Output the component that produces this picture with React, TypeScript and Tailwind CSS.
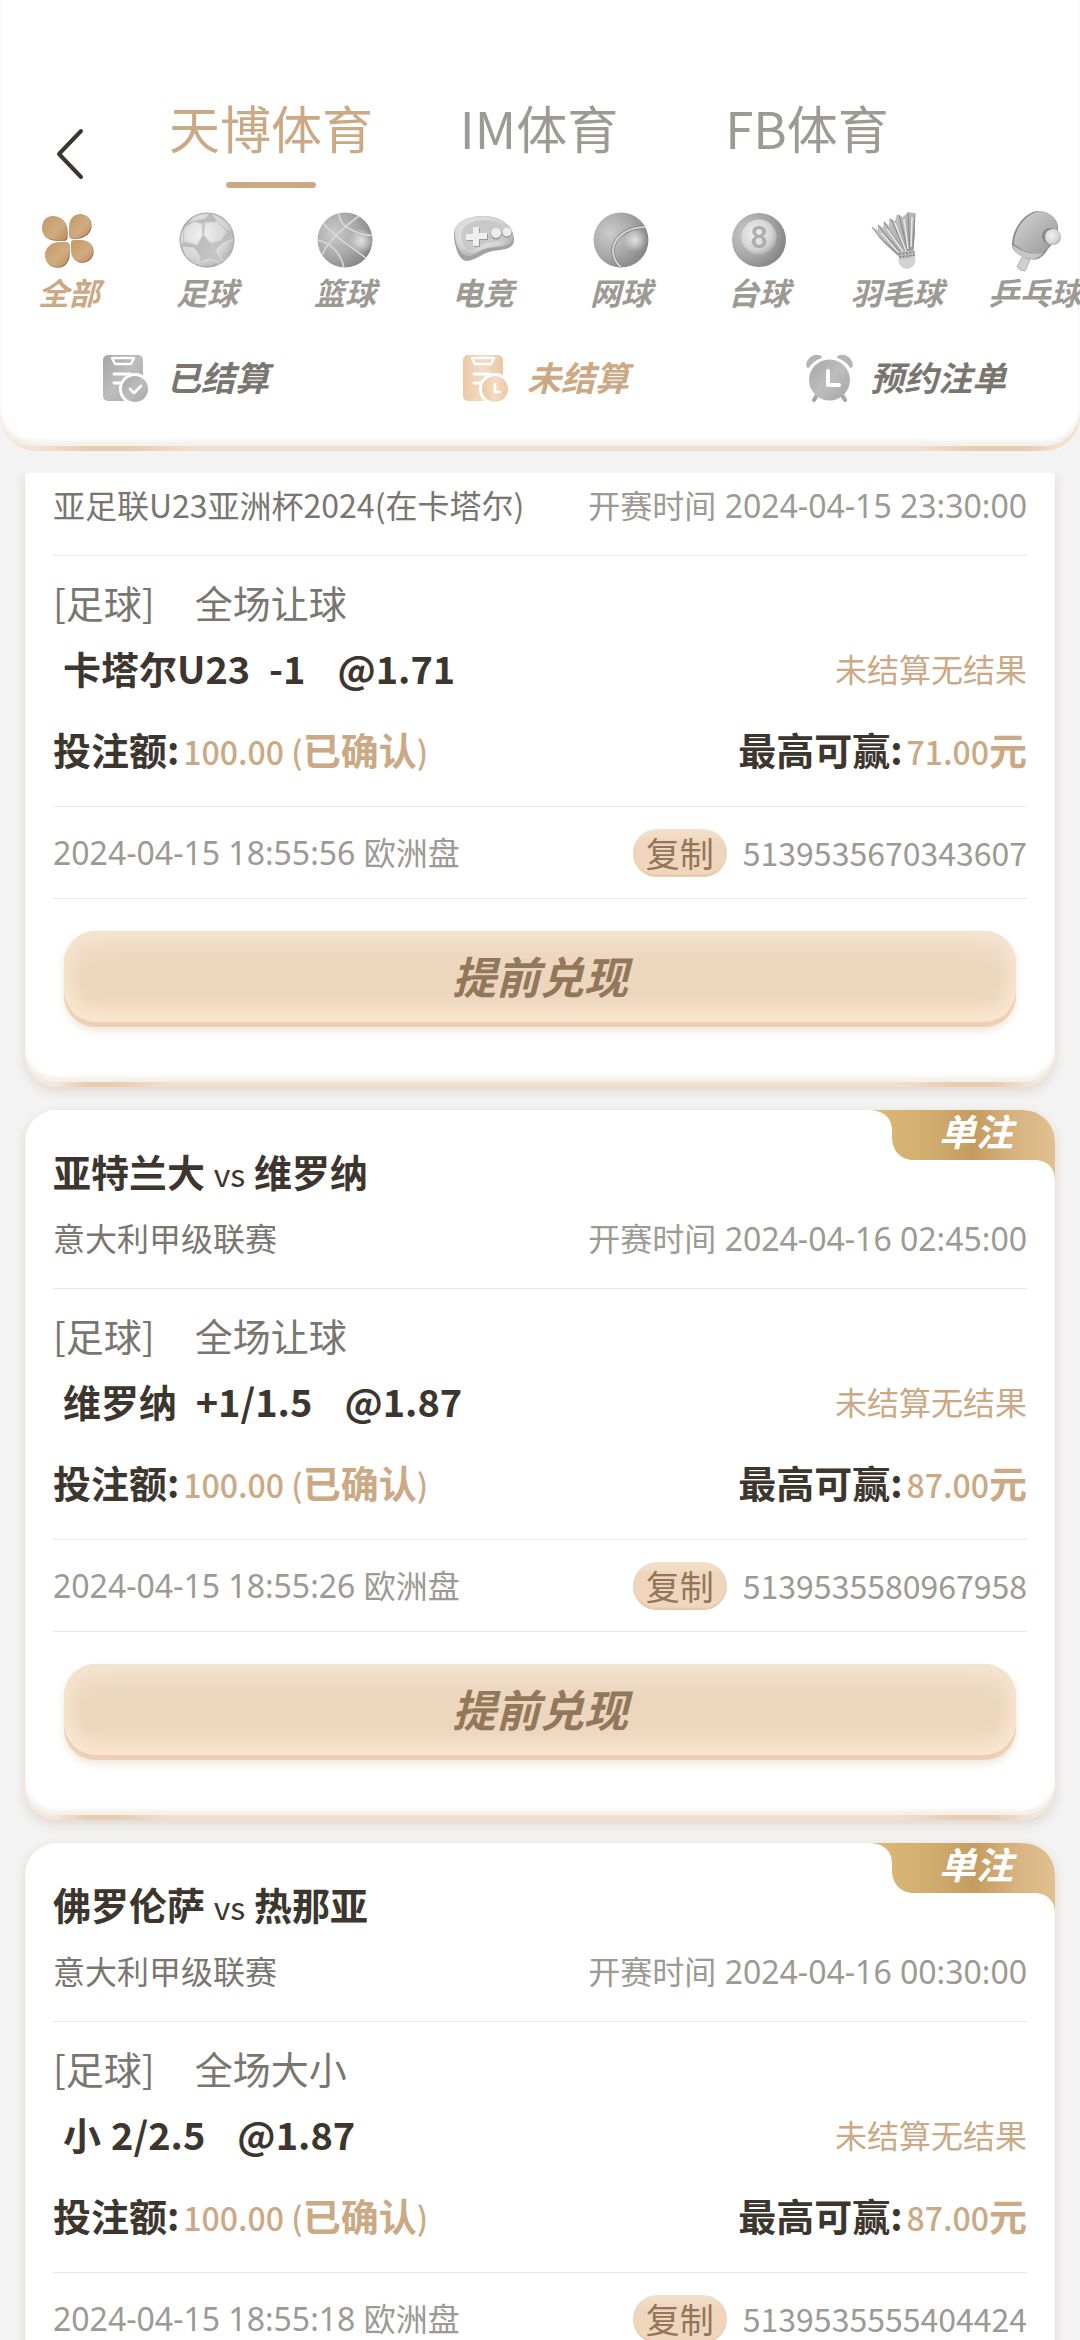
import React, { useState } from 'react';

interface Bet {
  id: string;
  home?: string;
  away?: string;
  league: string;
  kickoff: string;
  market: string;
  pick: string;
  line: string;
  odds: string;
  stake: string;
  win: string;
  placedAt: string;
}

const bets: Bet[] = [
  {
    id: '5139535670343607', league: '亚足联U23亚洲杯2024(在卡塔尔)', kickoff: '2024-04-15 23:30:00',
    market: '全场让球', pick: '卡塔尔U23', line: '\u00a0-1', odds: '1.71', stake: '100.00', win: '71.00', placedAt: '2024-04-15 18:55:56',
  },
  {
    id: '5139535580967958', home: '亚特兰大', away: '维罗纳', league: '意大利甲级联赛', kickoff: '2024-04-16 02:45:00',
    market: '全场让球', pick: '维罗纳', line: '\u00a0+1/1.5', odds: '1.87', stake: '100.00', win: '87.00', placedAt: '2024-04-15 18:55:26',
  },
  {
    id: '5139535555404424', home: '佛罗伦萨', away: '热那亚', league: '意大利甲级联赛', kickoff: '2024-04-16 00:30:00',
    market: '全场大小', pick: '小', line: '2/2.5', odds: '1.87', stake: '100.00', win: '87.00', placedAt: '2024-04-15 18:55:18',
  },
];

// gradients shared by all the sport icons
const IconDefs = () => (
  <svg className="absolute size-0" aria-hidden="true">
    <defs>
      <linearGradient id="gold" x1="0" y1="0" x2="1" y2="1">
        <stop offset="0" stopColor="#c49a68" />
        <stop offset="0.6" stopColor="#d0ab80" />
        <stop offset="1" stopColor="#b68b5b" />
      </linearGradient>
      <radialGradient id="ballLight" cx="0.4" cy="0.4" r="0.65">
        <stop offset="0" stopColor="#f2f2f2" />
        <stop offset="0.7" stopColor="#d4d4d4" />
        <stop offset="1" stopColor="#adadad" />
      </radialGradient>
      <radialGradient id="ballDark" cx="0.3" cy="0.38" r="0.75">
        <stop offset="0" stopColor="#cbcbcb" />
        <stop offset="0.55" stopColor="#a8a8a8" />
        <stop offset="1" stopColor="#828282" />
      </radialGradient>
      <radialGradient id="shine" cx="0.5" cy="0.5" r="0.5">
        <stop offset="0" stopColor="#e2e2e2" />
        <stop offset="1" stopColor="#e2e2e2" stopOpacity="0" />
      </radialGradient>
      <linearGradient id="metal" x1="0" y1="0" x2="1" y2="1">
        <stop offset="0" stopColor="#d4d4d4" />
        <stop offset="1" stopColor="#989898" />
      </linearGradient>
      <linearGradient id="tabGray" x1="0" y1="0" x2="1" y2="1">
        <stop offset="0" stopColor="#a6a6a6" />
        <stop offset="0.5" stopColor="#bdbdbd" />
        <stop offset="1" stopColor="#a6a6a6" />
      </linearGradient>
      <linearGradient id="tabGold" x1="0" y1="0" x2="1" y2="0">
        <stop offset="0" stopColor="#ecc9a5" />
        <stop offset="0.5" stopColor="#f3dcc4" />
        <stop offset="1" stopColor="#ebc8a5" />
      </linearGradient>
      <linearGradient id="badge" x1="0" y1="0" x2="1" y2="0">
        <stop offset="0.05" stopColor="#dcb877" />
        <stop offset="0.35" stopColor="#cfab6d" />
        <stop offset="0.56" stopColor="#c49c60" />
        <stop offset="0.8" stopColor="#d9b583" />
        <stop offset="1" stopColor="#e0c18f" />
      </linearGradient>
      <clipPath id="ballClip"><circle cx="30" cy="30" r="27.5" /></clipPath>
    </defs>
  </svg>
);

const petals = [
  'M14 6C21 6 28 11 28 21V26Q28 30 25 30H17C8 30 3 25 3 18S7 6 14 6Z',
  'M41 4C48 4 52 9 52 15S47 27 38 28H33Q30 28 30 25V17C30 9 35 4 41 4Z',
  'M21 32H27Q30 32 30 35V43C30 52 25 57 18 57S6 52 6 45S12 32 21 32Z',
  'M35 30H42C50 30 54 35 54 41S49 52 43 52S32 48 32 40V33Q32 30 35 30Z',
];

const AllIcon = () => (
  <>
    {petals.map(d => <path key={d} d={d} fill="#8d683d" transform="translate(0.6 0.8)" />)}
    {petals.map(d => <path key={d} d={d} fill="url(#gold)" />)}
  </>
);

const FootballIcon = () => (
  <g clipPath="url(#ballClip)">
    <circle cx="30" cy="30" r="28" fill="#bcbcbc" />
    <circle cx="38" cy="42" r="20" fill="url(#shine)" opacity="0.25" />
    <path
      fill="url(#ballLight)" stroke="#d9d9d9" strokeWidth="1.2" strokeLinejoin="round"
      d="M8 18L17 12L25 14L25 26L20 35L7 31ZM28 13L40 12L49 22L44 30L34 33L27 25ZM46 33L58 29L56 42L46 51L39 41ZM6 37L17 38L23 47L20 54L11 51ZM22 52L32 49L42 52L38 58L24 58ZM13 11L21 4L32 3L28 8L18 10ZM35 3L46 7L55 19L50 19L40 10ZM2 20L6 21L5 33L2 34Z"
    />
    <circle cx="30" cy="30" r="27" fill="none" stroke="#a5a5a5" strokeWidth="1.5" opacity="0.7" />
  </g>
);

const BasketballIcon = () => (
  <g clipPath="url(#ballClip)">
    <circle cx="30" cy="30" r="28" fill="url(#ballDark)" />
    <circle cx="46" cy="31" r="13" fill="url(#shine)" />
    <path fill="none" stroke="#d8d8d8" strokeWidth="1.6" d="M44 6C31 15 12 32 7 45M8 13C20 28 36 36 52 49M24 3C24 12 30 17 37 20C44 24 52 26 59 25M2 30C14 32 26 42 29 58" />
  </g>
);

const GamepadIcon = () => (
  <>
    <path fill="#a2a2a2" d="M1 24C1 12 16 6 30 6C47 6 62 16 61 31C60 41 46 39 36 42C27 45 21 51 13 51C5 50 1 34 1 24Z" />
    <path fill="url(#ballLight)" d="M2 19C5 10 17 6 31 6C47 7 61 15 60 28C59 38 45 36 35 38C26 40 20 47 14 46C6 45 1 30 2 19Z" />
    <path fill="#c9c9c9" d="M9 21C12 14 20 10 31 10C45 10 57 18 56 26C54 33 44 31 34 33C26 35 21 41 16 40C10 38 7 28 9 21Z" />
    <path fill="#999" d="M21 18h6v6h8v6h-8v7h-6v-6h-7v-6h7z" />
    <path fill="#efefef" d="M20 17h6v6h8v6h-8v7h-6v-6h-7v-6h7z" />
    <circle cx="43" cy="24" r="5.5" fill="#999" />
    <circle cx="54" cy="23" r="5" fill="#999" />
    <circle cx="43" cy="23" r="5" fill="#ededed" />
    <circle cx="54" cy="22" r="4.5" fill="#ededed" />
  </>
);

const TennisIcon = () => (
  <g clipPath="url(#ballClip)">
    <circle cx="30" cy="30" r="28" fill="url(#ballDark)" />
    <circle cx="44" cy="30" r="12" fill="url(#shine)" />
    <path fill="none" stroke="#7d7d7d" strokeWidth="3.6" d="M55 17C35 17 23 28 22 40C22 47 24 52 30 57" />
    <path fill="none" stroke="#d0d0d0" strokeWidth="2.2" d="M55 17C35 17 23 28 22 40C22 47 24 52 30 57" />
  </g>
);

const PoolIcon = () => (
  <>
    <circle cx="30" cy="30" r="27" fill="url(#ballDark)" />
    <circle cx="30" cy="27" r="17.5" fill="url(#ballLight)" />
    <text x="30" y="38" textAnchor="middle" fontSize="31" fontWeight="500" fontStyle="normal" fontFamily="Roboto, sans-serif" fill="#adadad">8</text>
  </>
);

const ShuttleIcon = () => (
  <>
    <path fill="url(#metal)" d="M5 17l6 3 0-6 5 4 1-7 5 5 0-8 6 3 2-7 6 3 5-5 6 1 1 22-3 19-14 2L17 33z" />
    <path fill="none" stroke="#858585" strokeWidth="1" d="M5 17l9 12 19 17M11 15l24 30M17 12l20 31M24 9l15 33M32 5l9 36M41 3l2 38M48 3l-2 38" />
    <path fill="none" stroke="#e6e6e6" strokeWidth="1.6" d="M14 23l19 21M20 19l17 24M28 13l11 28M37 9l4 30M45 7l-1 30" />
    <path fill="#bdbdbd" d="M31 42l16-2 1 9-15 3z" />
    <path fill="none" stroke="#808080" strokeWidth="1.5" strokeDasharray="2 1.5" d="M32 44l16-2M32 47l16-2" />
    <path fill="#d2d2d2" d="M31 49q8 1 17-3c2 8-3 13-8 13s-8-4-9-10z" />
  </>
);

const PaddleIcon = () => (
  <>
    <path fill="#d0d0d0" stroke="#b5b5b5" d="M17 47l8 3-5 11q-5 0-8-4z" />
    <path fill="#8e8e8e" d="M34 1C45 2 54 9 53 20C52 27 49 33 43 39C38 47 34 51 24 49C14 46 6 41 7 33C8 17 21 1 34 1Z" />
    <path fill="url(#metal)" d="M36 1C46 3 54 10 52 20C50 28 45 34 38 43C26 45 16 40 9 34C9 18 23 2 36 1Z" />
    <path fill="#c6c6c6" d="M8 35C17 42 27 45 38 43C33 49 28 50 22 48C13 46 8 41 8 35Z" />
    <circle cx="45" cy="26" r="8" fill="#6f6f6f" opacity="0.6" />
    <circle cx="48" cy="27" r="8" fill="url(#ballLight)" />
  </>
);

const sports = [
  { name: '全部', Icon: AllIcon },
  { name: '足球', Icon: FootballIcon },
  { name: '篮球', Icon: BasketballIcon },
  { name: '电竞', Icon: GamepadIcon },
  { name: '网球', Icon: TennisIcon },
  { name: '台球', Icon: PoolIcon },
  { name: '羽毛球', Icon: ShuttleIcon },
  { name: '乒乓球', Icon: PaddleIcon },
];

const Slip = ({ fill, mark }: { fill: string; mark: string }) => (
  <svg viewBox="0 0 48 48" className="size-12 shrink-0" fill="none">
    <rect y="1" width="40" height="46" rx="5" fill={fill} />
    <path d="M9 4h22l-3 6H12z" stroke="#fff" strokeWidth="2.4" strokeLinejoin="round" />
    <path d="M11 20h16M11 29h6" stroke="#fff" strokeWidth="3" strokeLinecap="round" />
    <circle cx="32" cy="35" r="16" fill="#fff" />
    <circle cx="32" cy="35" r="13" fill={fill} />
    <path d={mark} stroke="#fff" strokeWidth="2.6" strokeLinecap="round" strokeLinejoin="round" />
  </svg>
);

const AlarmIcon = () => (
  <svg viewBox="0 0 48 48" className="size-12 shrink-0" fill="none">
    <path d="M2 12A9 9 0 0 1 14 3Q6 6 2 12ZM45 12A9 9 0 0 0 33 3Q41 6 45 12Z" fill="#b5b5b5" stroke="#b5b5b5" strokeWidth="3.4" strokeLinejoin="round" />
    <path d="M11 41l-3 5M36 41l3 5" stroke="#a6a6a6" strokeWidth="4" strokeLinecap="round" />
    <circle cx="23.5" cy="26" r="20.5" fill="url(#tabGray)" />
    <path d="M22 17v14h11" stroke="#fff" strokeWidth="4" strokeLinecap="round" strokeLinejoin="round" />
  </svg>
);

const statusTabs = [
  { name: '已结算', icon: <Slip fill="url(#tabGray)" mark="M27 35l4 4 7-7" /> },
  { name: '未结算', icon: <Slip fill="url(#tabGold)" mark="M32 30v8h5" /> },
  { name: '预约注单', icon: <AlarmIcon /> },
];

const BetCard: React.FC<{ bet: Bet }> = ({ bet }) => {
  const hasTitle = Boolean(bet.home);

  return (
    <article className={`pb-[5px] bg-[linear-gradient(90deg,#f7ebe1_0%,#f5e6da_3%,#e9ccb0_6%,#e9ccb0_9%,#f3dfce_14%,#f3dfce_85%,#e9ccb0_90%,#e9ccb0_94%,#f5e6da_98%)] shadow-[0_4px_12px_#ded6cf] ${hasTitle ? 'rounded-[32px]' : 'rounded-b-[32px]'}`}>
      <div className={`relative bg-white px-7 shadow-[inset_0_-6px_4px_-1px_#f4f0ea] ${hasTitle ? 'rounded-[32px] pt-[35px]' : 'rounded-b-[32px] pt-[9px]'}`}>
        {hasTitle && (
          <>
            <h2 className="mb-[18px] text-[38px] leading-[52px] font-bold text-[#3d362f]">
              {bet.home} <span className="text-[32px] leading-none font-normal">vs</span> {bet.away}
            </h2>
            <div className="absolute top-0 right-0">
              <svg viewBox="0 0 184 70" className="w-[184px] h-[70px]">
                <path fill="url(#badge)" d="M0 0C14 1 21 9 21 21V27C21 40 29 50 43 50H163C174 50 184 56 184 70V32C184 14 170 0 151 0Z" />
              </svg>
              <span className="absolute top-0 right-[42px] text-[37px] leading-[40px] font-bold italic text-white">单注</span>
            </div>
          </>
        )}

        <div className="flex items-baseline justify-between pb-[29px] border-b border-[#e8e8e8] text-[32px]">
          <span className="leading-[44px] text-[#7a756f]">{bet.league}</span>
          <span className="font-['Noto_Sans','Noto_Sans_CJK_SC',sans-serif] leading-none text-[#9d9993]">开赛时间 {bet.kickoff}</span>
        </div>

        <div className="pt-[22px] pb-[29px] border-b border-[#e8e8e8]">
          <p className="flex gap-10 text-[38px] leading-[48px] text-[#7a756f]">
            <span>[足球]</span>
            <span>{bet.market}</span>
          </p>
          <div className="flex items-center justify-between mt-[14px]">
            <p className="flex pl-[10px] text-[38px] leading-[56px] font-bold text-[#3d362f]">
              <span className="mr-[10px]">{bet.pick}</span>
              <span className="mr-8">{bet.line}</span>
              <span>@{bet.odds}</span>
            </p>
            <span className="text-[32px] leading-[48px] text-[#cba985]">未结算无结果</span>
          </div>
          <div className="flex justify-between mt-[25px] text-[38px] leading-[56px] font-bold text-[#3d362f]">
            <p>
              投注额:<span className="ml-1 text-[#cba985]"><span className="text-[32px] leading-none font-medium">{bet.stake} (</span>已确认<span className="text-[32px] leading-none font-medium">)</span></span>
            </p>
            <p>
              最高可赢:<span className="ml-1 text-[#cba985]"><span className="text-[32px] leading-none font-medium">{bet.win}</span>元</span>
            </p>
          </div>
        </div>

        <div className="flex items-center justify-between pt-[22px] pb-[21px] border-b border-[#e8e8e8] text-[32px] leading-[46px] text-[#9d9993]">
          <span className="font-['Noto_Sans','Noto_Sans_CJK_SC',sans-serif]">{bet.placedAt} 欧洲盘</span>
          <span className="flex items-start gap-4">
            <button className="h-12 px-[13px] rounded-full bg-[linear-gradient(#f3e1cd,#eed5bc_30%,#f0d6bd)] shadow-[inset_0_-3px_2px_-1px_#e6c8aa] text-[34px] leading-[46px] text-[#92755a]">复制</button>
            {bet.id}
          </span>
        </div>

        <div className="px-[11px] pt-8 pb-[55px]">
          <button className="w-full h-24 pb-[9px] rounded-[32px] bg-[#edd6be] shadow-[inset_0_-5px_0_#edcfb5,inset_0_-18px_18px_#fae6d0,inset_0_12px_24px_#f4e5d3,inset_0_0_20px_#f3dec2,0_4px_8px_#f0e6da] text-[44px] font-bold italic text-[#92785a]">
            提前兑现
          </button>
        </div>
      </div>
    </article>
  );
};

export default function App() {
  const [venue, setVenue] = useState('天博体育');
  const [sport, setSport] = useState('全部');
  const [status, setStatus] = useState('未结算');

  return (
    <div className="flex flex-col h-screen overflow-hidden bg-[#f3f3f3] font-['Noto_Sans_CJK_SC',sans-serif]">
      <IconDefs />
      <header className="shrink-0 pb-[5px] rounded-b-[36px] bg-[linear-gradient(90deg,#f7ebe1_0%,#f3dfce_4%,#e9ccb0_8%,#e9ccb0_12%,#f3dfce_18%,#f3dfce_85%,#e9ccb0_90%,#e9ccb0_95%,#f3dfce_98%)]">
        <div className="pt-[91px] pb-[44px] rounded-b-[36px] bg-white shadow-[inset_0_-6px_4px_-1px_#f4f0ea]">
          <div className="flex items-end">
            <button aria-label="返回" className="w-[137px] pl-[54px] pb-[7px]">
              <svg viewBox="0 0 32 54" className="w-8 h-[54px]" fill="none" stroke="#3d362f" strokeWidth="4" strokeLinecap="round" strokeLinejoin="round">
                <path d="M27 4L5 27l22 23" />
              </svg>
            </button>
            {['天博体育', 'IM体育', 'FB体育'].map(name => (
              <button
                key={name} onClick={() => setVenue(name)}
                className={`flex flex-col items-center gap-[19px] w-[268px] text-[51px] leading-[72px] ${venue === name ? 'text-[#cba985]' : 'text-[#9d9993]'}`}
              >
                {name}
                <span className={`w-[90px] h-1.5 rounded-full ${venue === name ? 'bg-[#cba985]' : ''}`} />
              </button>
            ))}
          </div>

          <nav className="flex mt-[22px] overflow-hidden">
            {sports.map(({ name, Icon }) => (
              <button
                key={name} onClick={() => setSport(name)}
                className={`flex flex-col items-center shrink-0 w-[138px] text-[31px] leading-[44px] font-bold italic ${sport === name ? 'text-[#cba985]' : 'text-[#9d9993]'}`}
              >
                <svg viewBox="0 0 60 60" className="size-15 overflow-visible"><Icon /></svg>
                {name}
              </button>
            ))}
          </nav>

          <div className="grid grid-cols-3 mt-10">
            {statusTabs.map(({ name, icon }) => (
              <button
                key={name} onClick={() => setStatus(name)}
                className={`flex items-start justify-center gap-4 pl-3 text-[34px] leading-[46px] font-bold italic ${status === name ? 'text-[#cba985]' : 'text-[#7a756f]'}`}
              >
                {icon}
                {name}
              </button>
            ))}
          </div>
        </div>
      </header>

      <main className="flex flex-col flex-1 min-h-0 gap-[23px] mt-[22px] px-[25px] overflow-y-auto [scrollbar-width:none] *:shrink-0">
        {bets.map(bet => <BetCard key={bet.id} bet={bet} />)}
      </main>
    </div>
  );
}
